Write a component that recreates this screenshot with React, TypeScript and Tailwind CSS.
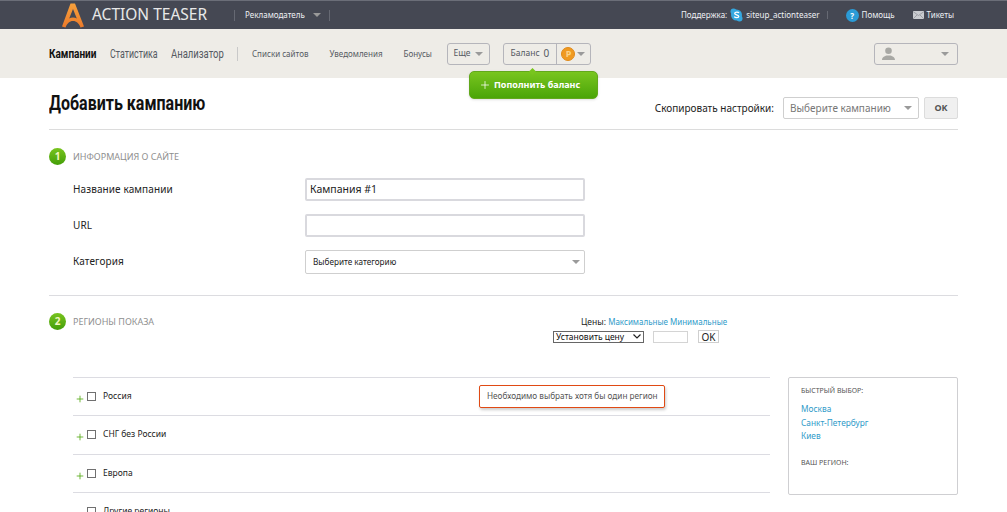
import { Plus } from "lucide-react"

const font = { fontFamily: '"Noto Sans", sans-serif' }
const narrow = { fontFamily: 'Roboto, sans-serif' }

function Caret({ className = "" }: { className?: string }) {
  return <span className={`inline-block w-0 h-0 border-x-[4px] border-x-transparent border-t-[4px] border-t-[#9a9a9a] ${className}`} />
}

function Logo() {
  return (
    <svg width="24" height="26" viewBox="0 0 24 26" className="shrink-0">
      <defs>
        <linearGradient id="lg" x1="0" y1="0" x2="0" y2="1">
          <stop offset="0" stopColor="#f7a13c" />
          <stop offset="1" stopColor="#ec7a2a" />
        </linearGradient>
      </defs>
      <path d="M9.5 1.5h4.5L23 24.5l-3.500 1c-1.500-4-4-6.500-7.500-6.500s-6 2.500-7.500 6.500l-3.500-1zM12 7l-3.800 9.500c1.200-.7 2.400-1 3.800-1s2.600.3 3.800 1z" fill="url(#lg)" fillRule="evenodd" />
    </svg>
  )
}

function SkypeIcon() {
  return (
    <svg width="13" height="14" viewBox="0 0 13 14" className="shrink-0 ml-[3px]">
      <circle cx="6.500" cy="7" r="5.500" fill="#35a8e0" />
      <circle cx="3.500" cy="3.500" r="3" fill="#35a8e0" />
      <circle cx="9.500" cy="10.500" r="3" fill="#35a8e0" />
      <path d="M9 5c-.6-.9-3.800-1.300-4.300.3C4.300 7 8.800 6.600 8.800 8.500c0 1.500-3.500 1.500-4.600.2" fill="none" stroke="#fff" strokeWidth="1.300" />
    </svg>
  )
}

function HelpIcon() {
  return (
    <span className="ml-[18px] w-[13px] h-[13px] rounded-full bg-[#2b9bd6] text-white text-[8px] leading-[13px] text-center font-bold shrink-0">?</span>
  )
}

function MailIcon() {
  return (
    <svg width="11" height="8" viewBox="0 0 11 8" className="shrink-0 ml-[18px]">
      <rect width="11" height="8" fill="#c9cbd0" />
      <path d="M0 .5l5.500 4 5.500-4M0 8l4-4M11 8L7 4" fill="none" stroke="#8a8c94" strokeWidth=".7" />
    </svg>
  )
}

function UserIcon() {
  return (
    <svg width="13" height="13" viewBox="0 0 13 13">
      <circle cx="6.500" cy="3.800" r="3.300" fill="#a8a8a4" />
      <path d="M0 13c0-3 2.500-3.500 4.500-4.500h4c2 1 4.500 1.500 4.500 4.500z" fill="#a8a8a4" />
    </svg>
  )
}

function CoinIcon() {
  return (
    <span className="w-[14px] h-[14px] rounded-full bg-[#f09a22] border border-[#e08a1a] text-[#fbd38a] text-[9px] leading-[12px] text-center font-bold">Р</span>
  )
}

function NarrowLink({ children, className }: { children: string; className: string }) {
  return (
    <span className={`inline-block text-[13px] whitespace-nowrap origin-left ${className}`} style={narrow}>{children}</span>
  )
}

function StepHead({ n, title }: { n: number; title: string }) {
  return (
    <div className="flex items-center gap-[7px]">
      <span className="w-[17px] h-[17px] rounded-full bg-gradient-to-b from-[#78c41e] to-[#439e08] text-[#f4f7c0] text-[10px] leading-[17px] text-center font-bold">{n}</span>
      <span className="text-[9px] text-[#8f8f8f] uppercase">{title}</span>
    </div>
  )
}

function FieldRow({ label, children, className = "" }: { label: string; children: React.ReactNode; className?: string }) {
  return (
    <div className={`flex ${className}`}>
      <span className="w-[232px] pt-[4px] text-[10px] tracking-[0.1px] leading-[15px] text-[#222]">{label}</span>
      {children}
    </div>
  )
}

function RegionRow({ name, plus = true, children }: { name: string; plus?: boolean; children?: React.ReactNode }) {
  return (
    <div className="flex items-start h-[38.300px] border-t border-[#dcdce2] pl-[2px] pt-[13px] relative">
      <span className="w-[9px] h-[9px] mt-[3px] mr-[3px] text-[#55aa14]">{plus && <Plus size={10} strokeWidth={2} />}</span>
      <span className="w-[9px] h-[9px] mt-[1px] border border-[#707070] mr-[7px]" />
      <span className="text-[8.500px] leading-[10px] text-[#222]">{name}</span>
      {children}
    </div>
  )
}

export default function App() {
  return (
    <div className="w-[1007px] h-[512px] overflow-hidden bg-white" style={font}>
      {/* top bar */}
      <div className="h-[29px] bg-[#454853] border-t border-[#6b6e78] flex items-center pl-[61px] pr-[53px] text-[#eef0f4]">
        <Logo />
        <span className="ml-[7px] text-[15.500px] leading-none text-[#e8e8e8]">ACTION TEASER</span>
        <span className="ml-[27px] w-px h-[11px] bg-[#666973]" />
        <span className="ml-[10px] text-[8px]">Рекламодатель</span>
        <Caret className="ml-[8px] border-t-[#8a8c94]" />
        <span className="ml-[8px] w-px h-[11px] bg-[#666973]" />
        <div className="ml-auto flex items-center text-[8px]">
          <span>Поддержка:</span>
          <SkypeIcon />
          <span className="ml-[3px]">siteup_actionteaser</span>
          <span className="ml-[7px] w-px h-[8px] bg-[#666973]" />
          <HelpIcon />
          <span className="ml-[3px]">Помощь</span>
          <MailIcon />
          <span className="ml-[3px]">Тикеты</span>
        </div>
      </div>

      {/* nav */}
      <div className="h-[49px] bg-[#eeece7] flex items-center pl-[49px] pr-[49px] relative">
        <div className="w-[47px] pb-[4px]"><NarrowLink className="scale-x-[0.77] font-bold text-[#111]">Кампании</NarrowLink></div>
        <div className="ml-[14px] w-[48px] pb-[4px]"><NarrowLink className="scale-x-[0.68] text-[#555a62]">Статистика</NarrowLink></div>
        <div className="ml-[13px] w-[53px] pb-[4px]"><NarrowLink className="scale-x-[0.73] text-[#555a62]">Анализатор</NarrowLink></div>
        <span className="ml-[13px] w-px h-[14px] bg-[#c9c9c9]" />
        <span className="ml-[14px] text-[8px] text-[#555a62]">Списки сайтов</span>
        <span className="ml-[21px] text-[8px] text-[#555a62]">Уведомления</span>
        <span className="ml-[21px] text-[8px] text-[#555a62]">Бонусы</span>
        <div className="ml-[15px] h-[22px] w-[43px] border border-[#b5b5bb] rounded-[3px] flex items-center justify-center gap-[5px] text-[8.500px] text-[#555a62]">
          Еще <Caret />
        </div>
        <div className="ml-[13px] h-[22px] border border-[#b5b5bb] rounded-[3px] flex items-center text-[#555a62]">
          <span className="w-[52px] flex items-center justify-center gap-[4px] text-[8.500px]">Баланс <b className="text-[10px] font-normal">0</b></span>
          <span className="h-full w-[34px] border-l border-[#b5b5bb] flex items-center justify-center gap-[2px]"><CoinIcon /><Caret /></span>
        </div>
        <div className="ml-auto w-[84px] h-[22px] border border-[#b5b5bb] rounded-[3px] flex items-center justify-between pl-[7px] pr-[8px]">
          <UserIcon />
          <Caret />
        </div>
        {/* popup */}
        <div className="absolute left-[469px] top-[42px] w-[129px] h-[28px] rounded-[5px] border border-[#62a81c] bg-gradient-to-b from-[#78c51e] to-[#4aa507] flex items-center pl-[9px] gap-[3px] text-white text-[9px] font-bold shadow-sm">
          <span className="absolute left-[60px] -top-[3px] w-[5px] h-[5px] rotate-45 bg-[#78c51e]" />
          <Plus size={12} strokeWidth={1.500} />
          Пополнить баланс
        </div>
      </div>

      {/* content */}
      <div className="mx-[49px]">
        <div className="h-[52px] border-b border-[#dcdcdc] flex items-start relative">
          <div className="w-[156px] mt-[13px]">
            <h1 className="inline-block text-[20px] leading-[24px] font-bold text-[#111] whitespace-nowrap origin-left scale-x-[0.8]" style={narrow}>Добавить кампанию</h1>
          </div>
          <div className="ml-auto mt-[19px] flex items-center">
            <span className="text-[10px] text-[#222]">Скопировать настройки:</span>
            <div className="ml-[9px] w-[136px] h-[22px] border border-[#cfcfcf] rounded-[2px] flex items-center justify-between pl-[6px] pr-[6px] text-[10px] text-[#777]">
              Выберите кампанию <Caret />
            </div>
            <div className="ml-[5px] w-[34px] h-[22px] border border-[#dcdcdc] rounded-[2px] bg-[#f0f0f0] text-[9px] font-bold text-[#555] flex items-center justify-center">OK</div>
          </div>
        </div>

        <div className="h-[166px] border-b border-[#dcdce0] pt-[18px]">
          <StepHead n={1} title="Информация о сайте" />
          <div className="pl-[24px]">
            <FieldRow label="Название кампании" className="mt-[13px]">
              <div className="w-[280px] h-[23px] border-2 border-[#d9d9de] rounded-[2px] pl-[3px] text-[10.500px] leading-[18px] text-[#222]">Кампания #1</div>
            </FieldRow>
            <FieldRow label="URL" className="mt-[13px]">
              <div className="w-[280px] h-[23px] border-2 border-[#d9d9de] rounded-[2px]" />
            </FieldRow>
            <FieldRow label="Категория" className="mt-[13px]">
              <div className="w-[280px] h-[24px] border border-[#cfcfcf] rounded-[2px] flex items-center justify-between pl-[7px] pr-[4px] text-[8.200px] text-[#222]">
                Выберите категорию <Caret />
              </div>
            </FieldRow>
          </div>
        </div>

        <div className="pt-[17px] relative">
          <StepHead n={2} title="Регионы показа" />
          {/* prices */}
          <div className="absolute left-[504px] top-[20px] w-[220px] text-[8.500px] leading-[12px] whitespace-nowrap">
            <div className="pl-[28px]">
              <span className="text-[#222]">Цены: </span>
              <span className="text-[8px] text-[#2f9bc9]">Максимальные Минимальные</span>
            </div>
            <div className="flex mt-[2px] items-center">
              <div className="w-[91px] h-[12px] border border-[#666] flex items-center justify-between px-[2px] text-[#111]">
                Установить цену
                <svg width="8" height="5" viewBox="0 0 8 5"><path d="M.5.500L4 4l3.500-3.500" fill="none" stroke="#222" strokeWidth="1.200" /></svg>
              </div>
              <div className="ml-[9px] w-[35px] h-[12px] border border-[#d4d4d4]" />
              <div className="ml-[10px] w-[21px] h-[13px] border border-[#cfcfcf] flex items-center justify-center text-[10px] text-[#222]">OK</div>
            </div>
          </div>

          <div className="flex mt-[47px] pl-[24px] items-start">
            <div className="w-[697px]">
              <RegionRow name="Россия">
                <div className="absolute left-[406px] top-[7px] w-[186px] h-[23px] border border-[#e04a14] rounded-[2px] bg-white shadow-[1px_2px_3px_rgba(0,0,0,0.2)] flex items-center pl-[7px] text-[8.200px] text-[#555]">
                  Необходимо выбрать хотя бы один регион
                </div>
              </RegionRow>
              <RegionRow name="СНГ без России" />
              <RegionRow name="Европа" />
              <RegionRow name="Другие регионы" plus={false} />
            </div>
            <div className="ml-[18px] w-[170px] h-[118px] border border-[#cfcfd2] rounded-[2px] pl-[12px] pt-[8px]">
              <div className="text-[7px] leading-[10px] text-[#555]">БЫСТРЫЙ ВЫБОР:</div>
              <div className="mt-[6px] text-[8.300px] leading-[13.500px] text-[#2f9bc9]">
                <div>Москва</div>
                <div>Санкт-Петербург</div>
                <div>Киев</div>
              </div>
              <div className="mt-[15px] text-[7px] leading-[10px] text-[#555]">ВАШ РЕГИОН:</div>
            </div>
          </div>
        </div>
      </div>
    </div>
  )
}
